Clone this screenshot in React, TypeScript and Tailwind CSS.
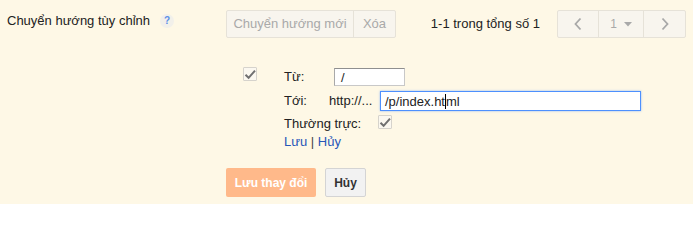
import React from 'react';

const font = { fontFamily: '"Liberation Sans", Arial, sans-serif' };

const Check = ({ className = '' }: { className?: string }) => (
  <div className={`w-[14px] h-[14px] border border-[#d6d3cc] bg-[#fbf8f0] rounded-[1px] flex items-center justify-center ${className}`}>
    <svg width="12" height="11" viewBox="0 0 12 11">
      <path d="M1.5 5.8 L4.6 8.8 L11 1.6" fill="none" stroke="#707070" strokeWidth="2" />
    </svg>
  </div>
);

const Chevron = ({ dir }: { dir: 'left' | 'right' }) => (
  <svg width="10" height="14" viewBox="0 0 10 14">
    <path
      d={dir === 'left' ? 'M7.5 1.5 L2.5 7 L7.5 12.5' : 'M2.5 1.5 L7.5 7 L2.5 12.5'}
      fill="none"
      stroke="#a8a8a8"
      strokeWidth="1.8"
    />
  </svg>
);

export default function App() {
  return (
    <div className="w-[693px] h-[204px] bg-[#fef8e6] text-[13px] text-[#222] overflow-hidden" style={font}>
      <div className="flex pt-[10px] pr-[7px]">
        <div className="w-[226px] pl-[7px] pt-[3px] flex items-start">
          <span className="leading-[16px]">Chuyển hướng tùy chỉnh</span>
          <span className="ml-[10px] mt-[1px] w-[14px] h-[14px] rounded-full bg-[#f2f0ea] flex items-center justify-center text-[10px] font-bold text-[#5b8fe8] leading-none">
            ?
          </span>
        </div>
        <div className="flex h-[28px] border border-[#e6e2d8] rounded-[2px] bg-[#f8f5ee] text-[#a9a9a9]">
          <div className="w-[127px] flex items-center justify-center border-r border-[#e6e2d8]">Chuyển hướng mới</div>
          <div className="w-[41px] flex items-center justify-center">Xóa</div>
        </div>
        <div className="flex-1" />
        <div className="flex items-center h-[28px] mr-[17px]">1-1 trong tổng số 1</div>
        <div className="flex h-[28px] border border-[#e6e2d8] rounded-[2px] bg-[#f8f5ee]">
          <div className="w-[41px] flex items-center justify-center border-r border-[#e6e2d8]">
            <Chevron dir="left" />
          </div>
          <div className="w-[45px] flex items-center justify-center border-r border-[#e6e2d8] text-[#a9a9a9] text-[12px]">
            <span>1</span>
            <svg className="ml-[7px]" width="8" height="5" viewBox="0 0 8 5">
              <path d="M0 0 L8 0 L4 4.5 Z" fill="#a9a9a9" />
            </svg>
          </div>
          <div className="w-[41px] flex items-center justify-center">
            <Chevron dir="right" />
          </div>
        </div>
      </div>

      <div className="flex mt-[28px] pl-[243px]">
        <Check className="mt-[1px]" />
        <div className="ml-[27px] flex flex-col">
          <div className="flex items-center h-[22px]">
            <span className="w-[50px]">Từ:</span>
            <div className="w-[71px] h-[18px] bg-white border border-[#c8c8c8] border-t-[#8f8f8f] border-l-[#a9a9a9] pl-[6px] flex items-center leading-none">
              /
            </div>
          </div>
          <div className="flex items-center h-[22px] mt-[2px]">
            <span className="w-[45px]">Tới:</span>
            <span className="w-[51px]">http://...</span>
            <div className="w-[261px] h-[20px] bg-white border border-[#4d90fe] shadow-[0_0_2px_rgba(77,144,254,0.6)] pl-[4px] flex items-center leading-none">
              <span>/p/index.ht</span>
              <span className="w-px h-[15px] bg-black" />
              <span>ml</span>
            </div>
          </div>
          <div className="flex items-start h-[20px] mt-[2px] pt-[2px]">
            <span className="leading-[16px]">Thường trực:</span>
            <Check className="ml-[17px] -mt-[1px]" />
          </div>
          <div className="h-[16px] leading-[16px]">
            <span className="text-[#2756b8]">Lưu</span>
            <span className="text-[#444]"> | </span>
            <span className="text-[#2756b8]">Hủy</span>
          </div>
        </div>
      </div>

      <div className="flex mt-[18px] pl-[226px] gap-[9px]">
        <div className="w-[90px] h-[29px] rounded-[2px] bg-[#ffb98a] text-white font-bold text-[12px] flex items-center justify-center">
          Lưu thay đổi
        </div>
        <div className="w-[41px] h-[29px] rounded-[2px] bg-[#f2f2f2] border border-[#d4d4d4] text-[#333] font-bold text-[12px] flex items-center justify-center">
          Hủy
        </div>
      </div>
    </div>
  );
}
